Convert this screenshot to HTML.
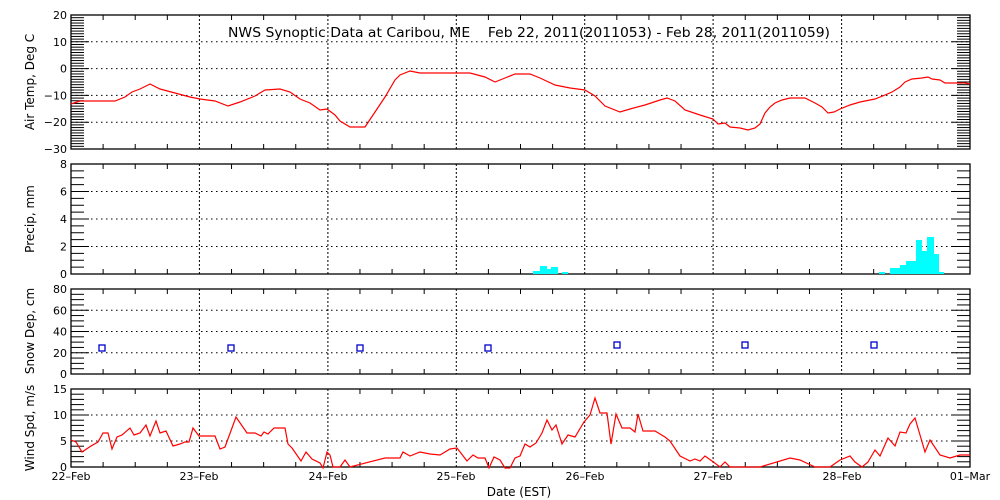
<!DOCTYPE html>
<html><head><meta charset="utf-8"><style>
html,body{margin:0;padding:0;background:#fff;width:1000px;height:500px;overflow:hidden}
svg{display:block}
text{font-family:"DejaVu Sans","Liberation Sans",sans-serif;font-size:11px;fill:#000}
</style></head><body>
<svg id="s" width="1000" height="500" viewBox="0 0 1000 500" xmlns="http://www.w3.org/2000/svg">
<rect width="1000" height="500" fill="#fff"/>
<g id="g"></g>
<text x="228" y="37" textLength="602" lengthAdjust="spacingAndGlyphs" style="font-size:13px;white-space:pre">NWS Synoptic Data at Caribou, ME    Feb 22, 2011(2011053) - Feb 28, 2011(2011059)</text>
<text transform="translate(34,82) rotate(-90)" text-anchor="middle" style="font-size:12px">Air Temp, Deg C</text>
<text transform="translate(34,219) rotate(-90)" text-anchor="middle" style="font-size:12px">Precip, mm</text>
<text transform="translate(34,331) rotate(-90)" text-anchor="middle" style="font-size:12px">Snow Dep, cm</text>
<text transform="translate(34,428) rotate(-90)" text-anchor="middle" style="font-size:12px">Wind Spd, m/s</text>
<text x="71" y="480" text-anchor="middle">22–Feb</text>
<text x="199" y="480" text-anchor="middle">23–Feb</text>
<text x="328" y="480" text-anchor="middle">24–Feb</text>
<text x="456" y="480" text-anchor="middle">25–Feb</text>
<text x="585" y="480" text-anchor="middle">26–Feb</text>
<text x="713" y="480" text-anchor="middle">27–Feb</text>
<text x="842" y="480" text-anchor="middle">28–Feb</text>
<text x="970" y="480" text-anchor="middle">01–Mar</text>
<text x="519" y="496" text-anchor="middle" style="font-size:12px">Date (EST)</text>
</svg>
<script>
var g=document.getElementById('g'),h='';
var L=71,R=970,days=[71,199.4,327.9,456.3,584.7,713.1,841.6,970];
function panel(top,bot,min,max,maj,minor){
 var sc=(bot-top)/(max-min);
 function Y(v){return bot-(v-min)*sc;}
 for(var v=min+maj;v<max;v+=maj){var y=Y(v);h+='<line x1="'+L+'" y1="'+y+'" x2="'+R+'" y2="'+y+'" stroke="#000" stroke-dasharray="1.5 3.5"/>';}
 for(var i=1;i<7;i++){h+='<line x1="'+days[i]+'" y1="'+top+'" x2="'+days[i]+'" y2="'+bot+'" stroke="#000" stroke-dasharray="2 2"/>';}
 for(var v=min;v<=max+1e-6;v+=minor){var y=Y(v);var isM=Math.abs((v-min)/maj-Math.round((v-min)/maj))<1e-6;var l=isM?18:13;
  h+='<line x1="'+L+'" y1="'+y+'" x2="'+(L+l)+'" y2="'+y+'" stroke="#000"/>';
  h+='<line x1="'+(R-l)+'" y1="'+y+'" x2="'+R+'" y2="'+y+'" stroke="#000"/>';}
 for(var i=0;i<28;i++){var x=L+i*(R-L)/28;var l=(i%4==0)?0:5;if(!l)continue;
  h+='<line x1="'+x+'" y1="'+top+'" x2="'+x+'" y2="'+(top+l)+'" stroke="#000"/><line x1="'+x+'" y1="'+bot+'" x2="'+x+'" y2="'+(bot-l)+'" stroke="#000"/>';}
 for(var v=min;v<=max+1e-6;v+=maj){var lab=(v<0?'−':'')+Math.abs(v);h+='<text x="67" y="'+(Y(v)+4)+'" text-anchor="end">'+lab+'</text>';}
 h+='<rect x="'+L+'" y="'+top+'" width="'+(R-L)+'" height="'+(bot-top)+'" fill="none" stroke="#000" stroke-width="1.3"/>';
}
panel(15,149,-30,20,10,1);
panel(164,274,0,8,2,0.5);
panel(289,374,0,80,20,5);
panel(389,467,0,15,5,1);
var t=[[71,104],[80,101],[90,101],[115,101],[125,97],[132,92],[140,89],[150,84],[160,89],[175,93],[190,97],[200,99],[215,101],[228,106],[240,102],[255,96],[265,90],[280,89],[290,92],[300,99],[310,103],[320,110],[327,109],[335,115],[340,121],[350,127],[360,127],[365,127],[375,112],[385,97],[395,80],[400,75],[410,71],[420,73],[440,73],[470,73],[485,77],[495,82],[505,78],[515,74],[530,74],[540,78],[555,85],[570,88],[585,90],[595,96],[605,106],[620,112],[630,109],[645,105],[660,100],[667,98],[675,101],[685,110],[700,115],[713,119],[718,124],[725,123],[730,127],[740,128],[748,130],[755,128],[760,124],[765,113],[770,107],[775,103],[782,100],[790,98],[805,98],[815,103],[822,107],[828,113],[834,112],[840,109],[850,105],[860,102],[875,99],[885,95],[892,92],[900,87],[905,82],[912,79],[922,78],[928,77],[932,79],[940,80],[945,83],[965,83],[970,84]];
h+='<polyline fill="none" stroke="#f00" stroke-width="1.2" points="'+t.join(' ')+'"/>';
var b=[[533,540,271],[540,547,266],[547,551,269],[551,558,267],[562,568,272],[879,885,272],[890,900,268],[900,906,265],[906,916,261],[916,922,240],[922,927,251],[927,934,237],[934,939,254],[939,944,272]];
b.forEach(function(r){h+='<rect x="'+r[0]+'" y="'+r[2]+'" width="'+(r[1]-r[0])+'" height="'+(274-r[2])+'" fill="#0ff"/>';});
[[102,348],[231,348],[360,348],[488,348],[617,345],[745,345],[874,345]].forEach(function(p){h+='<rect x="'+(p[0]-3)+'" y="'+(p[1]-3)+'" width="6" height="6" fill="none" stroke="#00c" stroke-width="1.3"/>';});
var w=[[71,440],[76,442],[82,452],[91,446],[98,442],[103,433],[108,433],[112,449],[117,437],[122,435],[130,428],[134,435],[140,433],[146,425],[150,436],[156,421],[160,433],[166,431],[173,446],[180,444],[185,442],[189,442],[193,428],[199,436],[215,436],[220,449],[225,447],[236,417],[247,433],[255,433],[261,436],[264,432],[268,434],[274,428],[285,428],[288,444],[292,448],[301,461],[306,452],[312,459],[320,463],[323,468],[327,452],[330,455],[333,467],[340,467],[345,460],[350,467],[385,458],[400,458],[403,452],[410,456],[420,452],[430,454],[440,455],[450,449],[457,448],[467,461],[473,455],[478,458],[485,458],[489,468],[494,457],[500,460],[505,468],[510,468],[515,458],[520,456],[525,444],[530,447],[536,443],[542,433],[547,420],[552,430],[556,425],[562,444],[568,435],[575,437],[584,422],[590,415],[595,398],[600,413],[607,413],[611,444],[616,414],[622,428],[630,428],[635,432],[638,414],[643,431],[655,431],[665,437],[670,441],[680,456],[690,461],[695,459],[700,461],[705,456],[712,461],[720,467],[725,462],[730,467],[760,467],[790,458],[800,460],[815,467],[830,467],[840,460],[850,456],[855,462],[862,467],[868,462],[875,450],[880,456],[888,438],[895,446],[900,432],[906,433],[910,424],[915,418],[925,452],[930,440],[940,455],[950,458],[960,455],[970,455]];
h+='<polyline fill="none" stroke="#f00" stroke-width="1.2" points="'+w.join(' ')+'"/>';
g.innerHTML=h;
</script>
</body></html>
